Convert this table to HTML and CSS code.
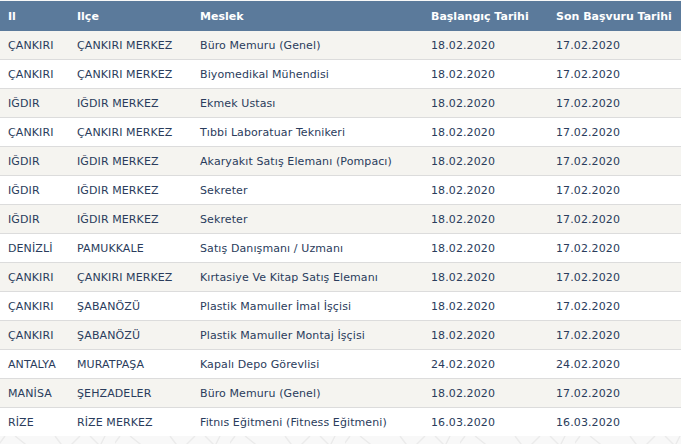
FILE: index.html
```html
<!DOCTYPE html>
<html lang="tr">
<head>
<meta charset="utf-8">
<link rel="stylesheet" href="styles.css">
</head>
<body>
<div class="page">
<table class="jobs">
<colgroup>
<col class="c-il"><col class="c-ilce"><col class="c-meslek"><col class="c-bas"><col class="c-son">
</colgroup>
<thead>
<tr><th>Il</th><th>Ilçe</th><th>Meslek</th><th>Başlangıç Tarihi</th><th>Son Başvuru Tarihi</th></tr>
</thead>
<tbody>
<tr><td>ÇANKIRI</td><td>ÇANKIRI MERKEZ</td><td>Büro Memuru (Genel)</td><td>18.02.2020</td><td>17.02.2020</td></tr>
<tr><td>ÇANKIRI</td><td>ÇANKIRI MERKEZ</td><td>Biyomedikal Mühendisi</td><td>18.02.2020</td><td>17.02.2020</td></tr>
<tr><td>IĞDIR</td><td>IĞDIR MERKEZ</td><td>Ekmek Ustası</td><td>18.02.2020</td><td>17.02.2020</td></tr>
<tr><td>ÇANKIRI</td><td>ÇANKIRI MERKEZ</td><td>Tıbbi Laboratuar Teknikeri</td><td>18.02.2020</td><td>17.02.2020</td></tr>
<tr><td>IĞDIR</td><td>IĞDIR MERKEZ</td><td>Akaryakıt Satış Elemanı (Pompacı)</td><td>18.02.2020</td><td>17.02.2020</td></tr>
<tr><td>IĞDIR</td><td>IĞDIR MERKEZ</td><td>Sekreter</td><td>18.02.2020</td><td>17.02.2020</td></tr>
<tr><td>IĞDIR</td><td>IĞDIR MERKEZ</td><td>Sekreter</td><td>18.02.2020</td><td>17.02.2020</td></tr>
<tr><td>DENİZLİ</td><td>PAMUKKALE</td><td>Satış Danışmanı / Uzmanı</td><td>18.02.2020</td><td>17.02.2020</td></tr>
<tr><td>ÇANKIRI</td><td>ÇANKIRI MERKEZ</td><td>Kırtasiye Ve Kitap Satış Elemanı</td><td>18.02.2020</td><td>17.02.2020</td></tr>
<tr><td>ÇANKIRI</td><td>ŞABANÖZÜ</td><td>Plastik Mamuller İmal İşçisi</td><td>18.02.2020</td><td>17.02.2020</td></tr>
<tr><td>ÇANKIRI</td><td>ŞABANÖZÜ</td><td>Plastik Mamuller Montaj İşçisi</td><td>18.02.2020</td><td>17.02.2020</td></tr>
<tr><td>ANTALYA</td><td>MURATPAŞA</td><td>Kapalı Depo Görevlisi</td><td>24.02.2020</td><td>24.02.2020</td></tr>
<tr><td>MANİSA</td><td>ŞEHZADELER</td><td>Büro Memuru (Genel)</td><td>18.02.2020</td><td>17.02.2020</td></tr>
<tr><td>RİZE</td><td>RİZE MERKEZ</td><td>Fitnıs Eğitmeni (Fitness Eğitmeni)</td><td>16.03.2020</td><td>16.03.2020</td></tr>
</tbody>
</table>
</div>
</body>
</html>
```
FILE: styles.css
```css
html, body {
  margin: 0;
  padding: 0;
}
body {
  min-height: 444px;
  background-color: #f8f8f8;
  background-image: url("data:image/svg+xml;utf8,<svg xmlns='http://www.w3.org/2000/svg' width='115' height='60'><g fill='none' stroke='%23ebebeb' stroke-width='1.5'><path d='M5 0 L-10 20'/><path d='M15 0 L40 20'/><path d='M55 0 L70 20'/><path d='M80 0 L60 20'/><path d='M90 0 L110 20'/><path d='M105 0 L95 20'/></g></svg>");
  background-position: 0 436px;
}
.page {
  padding-top: 1px;
}
.jobs {
  width: 681px;
  border-collapse: collapse;
  table-layout: fixed;
  font-family: "DejaVu Sans", Verdana, sans-serif;
  font-size: 11px;
  color: #2a3c5c;
}
.c-il { width: 69px; }
.c-ilce { width: 123px; }
.c-meslek { width: 231px; }
.c-bas { width: 125px; }
.c-son { width: 133px; }
.jobs th {
  background: #5b7a9b;
  color: #ffffff;
  font-weight: bold;
  text-align: left;
  height: 30px;
  padding: 0 8px;
  white-space: nowrap;
}
.jobs td {
  height: 28px;
  padding: 0 8px;
  border-bottom: 1px solid #dcdcdc;
  white-space: nowrap;
  letter-spacing: 0.1px;
}
.jobs tbody tr:nth-child(odd) td { background: #f5f4f0; }
.jobs tbody tr:nth-child(even) td { background: #ffffff; }
.jobs tbody tr:last-child td { border-bottom: 0; }
```
